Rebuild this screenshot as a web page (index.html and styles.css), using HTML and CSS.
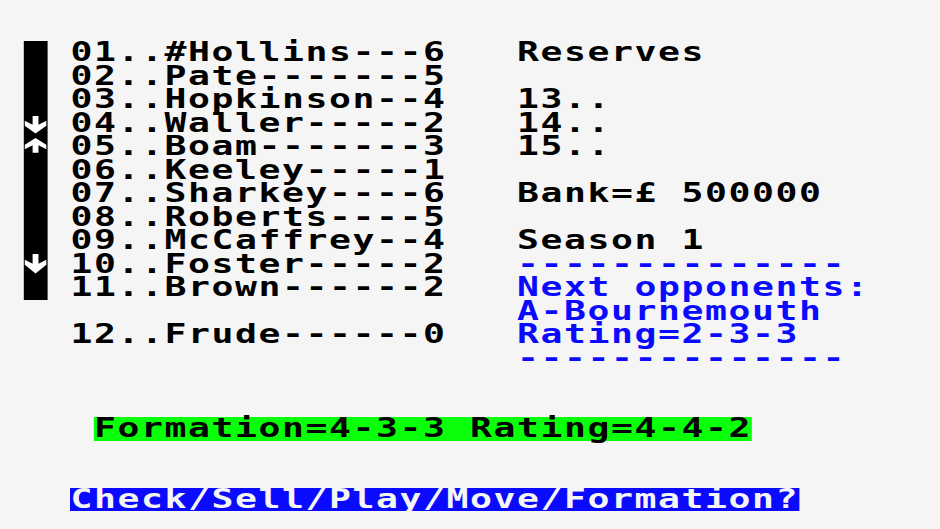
FILE: index.html
```html
<!DOCTYPE html>
<html lang="en">
<head>
<meta charset="utf-8">
<title>Team</title>
<link rel="stylesheet" href="styles.css">
</head>
<body>
<div class="screen">
  <div class="top">
    <div class="bar">
      <div class="bar-cell"></div>
      <div class="bar-cell"></div>
      <div class="bar-cell"></div>
      <div class="bar-cell"><svg class="arrow" viewBox="0 0 24 24" preserveAspectRatio="none"><path d="M9 4H15V13L23 9V14L12 22L1 14V9L9 13Z"/></svg></div>
      <div class="bar-cell"><svg class="arrow" viewBox="0 0 24 24" preserveAspectRatio="none"><path d="M12 3L23 10V14.5L15 10.5V18H9V10.5L1 14.5V10Z"/></svg></div>
      <div class="bar-cell"></div>
      <div class="bar-cell"></div>
      <div class="bar-cell"></div>
      <div class="bar-cell"></div>
      <div class="bar-cell"><svg class="arrow" viewBox="0 0 24 24" preserveAspectRatio="none"><path d="M9 1H15V11L23 7V12L12 21L1 12V7L9 11Z"/></svg></div>
      <div class="bar-cell"></div>
    </div>
    <div class="players">
      <div class="line">01..#Hollins---6</div>
      <div class="line">02..Pate-------5</div>
      <div class="line">03..Hopkinson--4</div>
      <div class="line">04..Waller-----2</div>
      <div class="line">05..Boam-------3</div>
      <div class="line">06..Keeley-----1</div>
      <div class="line">07..Sharkey----6</div>
      <div class="line">08..Roberts----5</div>
      <div class="line">09..McCaffrey--4</div>
      <div class="line">10..Foster-----2</div>
      <div class="line">11..Brown------2</div>
      <div class="line"></div>
      <div class="line">12..Frude------0</div>
    </div>
    <div class="side">
      <div class="line">Reserves</div>
      <div class="line"></div>
      <div class="line">13..</div>
      <div class="line">14..</div>
      <div class="line">15..</div>
      <div class="line"></div>
      <div class="line">Bank=£ 500000</div>
      <div class="line"></div>
      <div class="line">Season 1</div>
      <div class="line blue">--------------</div>
      <div class="line blue">Next opponents:</div>
      <div class="line blue">A-Bournemouth</div>
      <div class="line blue">Rating=2-3-3</div>
      <div class="line blue">--------------</div>
    </div>
  </div>
  <div class="line formation-row"><span class="hl-green">Formation=4-3-3 Rating=4-4-2</span></div>
  <div class="line menu-row"><span class="hl-blue">Check/Sell/Play/Move/Formation?</span></div>
</div>
</body>
</html>
```
FILE: styles.css
```css
:root {
  --c: 16.7857px;
  --r: 23.5px;
}
html, body {
  margin: 0;
  padding: 0;
  background: #f5f5f5;
  width: 940px;
  height: 529px;
  overflow: hidden;
}
.screen {
  width: 671.43px;
  padding-top: 41px;
  transform: scaleX(1.4);
  transform-origin: 0 0;
  font-family: "DejaVu Sans Mono", "Liberation Mono", monospace;
  font-weight: bold;
  font-size: 26px;
  letter-spacing: 1.132px;
  line-height: var(--r);
  color: #000;
}
.top {
  display: flex;
  align-items: flex-start;
}
.bar {
  margin-left: var(--c);
  width: var(--c);
  background: #000;
  display: flex;
  flex-direction: column;
}
.bar-cell {
  height: var(--r);
}
.arrow {
  display: block;
  width: 100%;
  height: 100%;
  fill: #fff;
}
.players {
  margin-left: var(--c);
  width: calc(var(--c) * 19);
}
.side {
  width: calc(var(--c) * 17);
}
.line {
  height: var(--r);
  white-space: pre;
}
.blue {
  color: #0a0aff;
}
.formation-row {
  margin-top: calc(var(--r) * 2);
  padding-left: calc(var(--c) * 4);
}
.menu-row {
  margin-top: calc(var(--r) * 2);
  padding-left: calc(var(--c) * 3);
}
.hl-green {
  display: inline-block;
  height: var(--r);
  background: #0aff0a;
  color: #000;
}
.hl-blue {
  display: inline-block;
  height: var(--r);
  background: #0a0aff;
  color: #f5f5f5;
}
```
